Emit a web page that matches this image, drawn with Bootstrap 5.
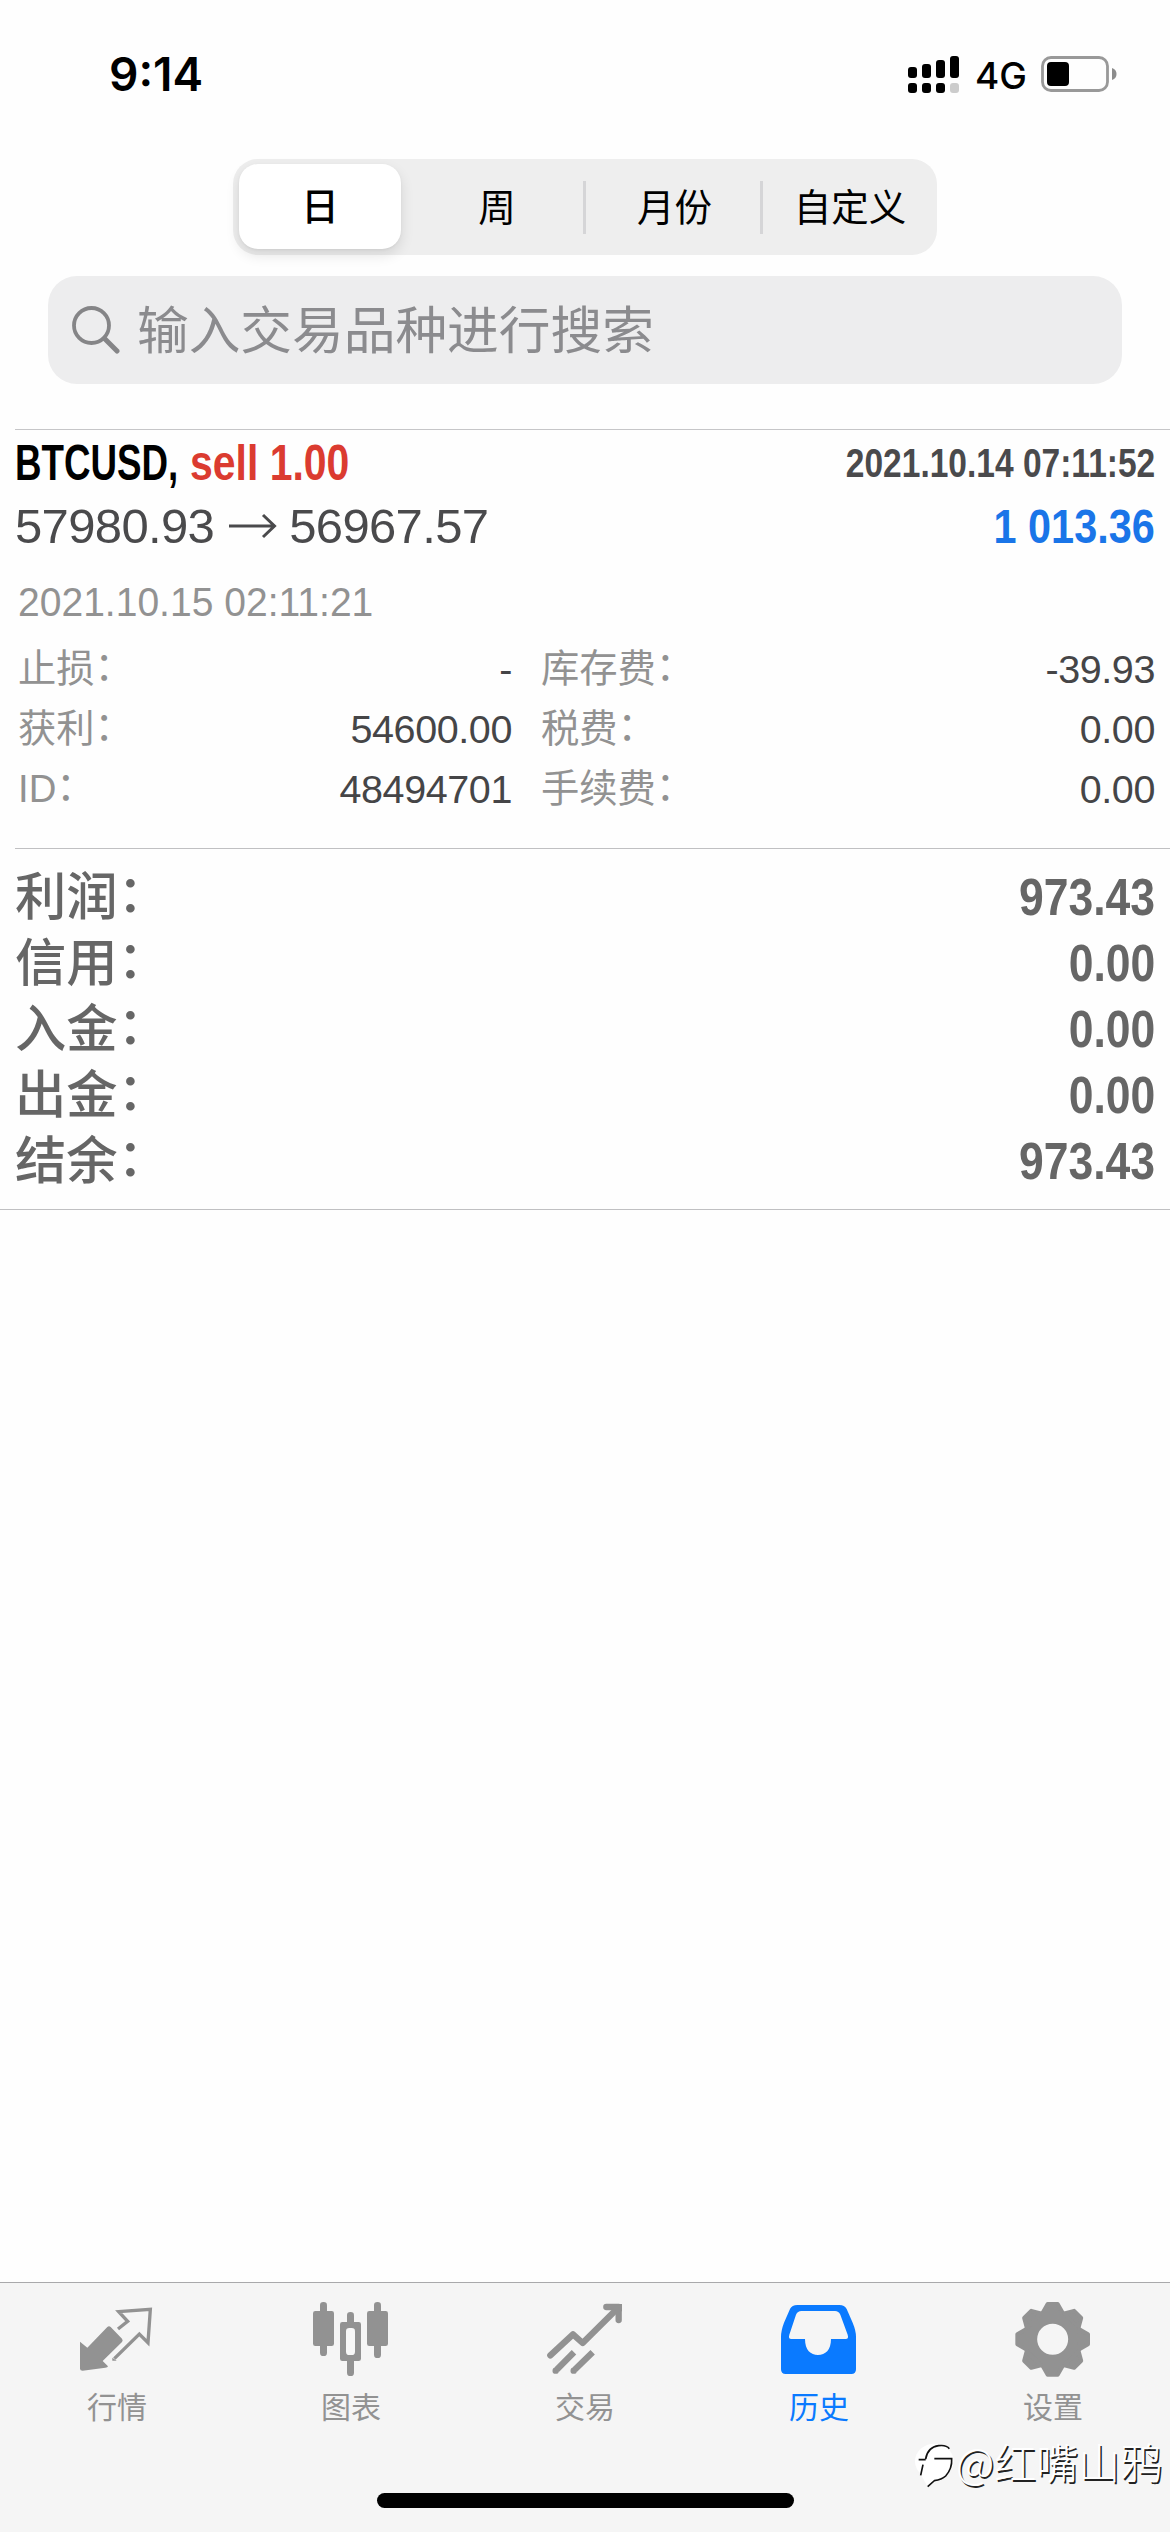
<!DOCTYPE html>
<html lang="zh-CN">
<head>
<meta charset="utf-8">
<meta name="viewport" content="width=device-width, initial-scale=1">
<title>历史</title>
<link href="https://cdn.jsdelivr.net/npm/bootstrap@5.3.0/dist/css/bootstrap.min.css" rel="stylesheet">
<style>
body{font-family:"Liberation Sans","Noto Sans CJK SC",sans-serif;background:#fefefe;color:#000;}
.screen{width:1170px;height:2532px;overflow:hidden}
.status{height:159px;padding:0 53px 0 109px;font-family:Inter,sans-serif}
.clock{font-size:46px;font-weight:600;line-height:56px;margin-top:46px}
.net{font-size:37px;font-weight:500;line-height:46px;margin-left:15px;margin-right:14px;margin-top:53px}
.signal,.battery{margin-top:56px}
.seg{width:704px;height:96px;background:#eee;border-radius:25px;font-size:37.5px}
.seg-item{line-height:98px;padding:0;border:0;background:none;flex:0 0 177px}
.seg-item.active{padding:5px 7px 6px 6px;flex-basis:175px}
.seg-item.active span{display:block;height:85px;line-height:87px;background:#fff;border-radius:19px;box-shadow:0 6px 14px rgba(0,0,0,.11),0 1px 3px rgba(0,0,0,.05);font-weight:500}
.seg-item.wide{flex-basis:178px}
.seg-item.last{flex-basis:174px}
.seg-item.split{background:linear-gradient(#d5d5d7,#d5d5d7) right 22px/3px 53px no-repeat}
.search{margin:21px 48px 0 48px;height:108px;border-radius:29px;background:#ededee;padding-left:24px;color:#8b8b8e}
.search-text{font-size:51.7px;line-height:106px;margin-left:17px;padding-top:2px}
.deal{margin:45px 0 0 15px;border-top:1px solid #c6c6c8;padding-right:15px;height:419px}
.row-a{height:66px;line-height:66px;font-size:49.5px}
.row-b{height:60px;line-height:60px;font-size:49px;color:#4a4a4c}
.row-c{margin-top:9px;padding-left:3px;height:74px;line-height:74px;font-size:40px;color:#929292}
.row-d{height:60px;line-height:60px;font-size:39.5px;color:#454547;letter-spacing:-.4px}
.row-d .key{font-size:38.3px;color:#929292;letter-spacing:0}
.price{letter-spacing:-.65px}
.arrow{margin:0 12px 0 15px}
.fit{display:inline-block;white-space:pre;transform-origin:left}
.fit-end{display:inline-block;white-space:pre;transform-origin:right}
.sym{width:175px}
.sym .fit{transform:scaleX(.742)}
.side .fit{transform:scaleX(.827)}
.red{color:#db3b30}
.blue{color:#1a75e8}
.when{font-size:40px;transform:scaleX(.838);color:#4a4a4c}
.gain{transform:scaleX(.845)}
.date{transform:scaleX(.976)}
.half-l{width:497px;padding-left:3px}
.half-r{padding-left:29px}
/* half-width, vertically centred colon */
.colon{font-family:"Noto Sans CJK JP",sans-serif;font-feature-settings:"halt";line-height:1}
.sum{border-top:1px solid #c0c0c2;margin-left:15px;padding:15px 15px 15px 0;color:#666;height:361px}
.sum-row{height:66px;line-height:66px;font-size:51.3px;font-weight:500}
.sum-row .key{line-height:68px}
.sum-row .fit-end{transform:scaleX(.855);font-weight:700;font-size:52px}
.end-line{height:1px;background:#c0c0c2}
.tabs{height:250px;background:#f5f5f5;border-top:1px solid #a9a9ab}
.tab-item{width:234px;color:#929292;padding-top:18px;font-size:30px;line-height:44px}
.tab-item svg{display:block;margin-bottom:9px}
.tab-item.active{color:#0a7aff}
.home{width:417px;height:15px;border-radius:8px;background:#000;left:377px;top:2493px}
.wm{left:913px;top:2431px;color:#fff;font-size:42px;line-height:60px;font-family:"Noto Sans CJK SC",sans-serif;font-weight:300;text-shadow:1.5px 1.5px 0 #222}
</style>
<script src="https://cdn.jsdelivr.net/npm/bootstrap@5.3.0/dist/js/bootstrap.bundle.min.js"></script>
</head>
<body>
<div class="screen position-relative d-flex flex-column">
  <header class="status d-flex align-items-start">
    <div class="clock me-auto">9:14</div>
    <svg class="signal" width="52" height="38" viewBox="907 56 52 38">
      <rect x="907" y="67" width="9" height="11" rx="3"/><rect x="921" y="64" width="9" height="14" rx="3"/><rect x="935" y="60" width="9" height="18" rx="3"/><rect x="949" y="56" width="9" height="22" rx="3"/>
      <rect x="907" y="83" width="9" height="10" rx="3"/><rect x="921" y="83" width="9" height="10" rx="3"/><rect x="935" y="83" width="9" height="10" rx="3"/><rect x="949" y="83" width="9" height="10" rx="3" fill="#ccc"/>
    </svg>
    <div class="net">4G</div>
    <svg class="battery" width="76" height="36" viewBox="0 0 76 36">
      <rect x="1.5" y="1.5" width="65" height="33" rx="8.5" fill="none" stroke="#999" stroke-width="2.8"/>
      <rect x="6" y="6" width="22" height="24" rx="4"/>
      <path d="M71 12q4.500 1.500 4.500 6t-4.500 6z" fill="#8c8c8c"/>
    </svg>
  </header>

  <div class="seg d-flex mx-auto flex-shrink-0" role="tablist">
    <button class="seg-item active"><span>日</span></button>
    <button class="seg-item split wide">周</button>
    <button class="seg-item split">月份</button>
    <button class="seg-item last">自定义</button>
  </div>

  <div class="search d-flex align-items-center flex-shrink-0">
    <svg width="48" height="48" viewBox="0 0 48 48" fill="none" stroke="#858587" stroke-linecap="round"><circle cx="19.500" cy="19.500" r="17.500" stroke-width="3.800"/><path d="M32.500 32.500 45 45" stroke-width="5"/></svg>
    <span class="search-text">输入交易品种进行搜索</span>
  </div>

  <main class="flex-grow-1">
    <section class="deal">
      <div class="row-a d-flex fw-bold">
        <div class="sym"><span class="fit">BTCUSD,</span></div>
        <div class="side red me-auto"><span class="fit">sell 1.00</span></div>
        <span class="fit-end when text-end">2021.10.14 07:11:52</span>
      </div>
      <div class="row-b d-flex align-items-center">
        <span class="price">57980.93</span>
        <svg class="arrow" width="48" height="26" viewBox="0 0 48 26" fill="none" stroke="#4a4a4c" stroke-width="3"><path d="M0 13H45M34 2 45.500 13 34 24"/></svg>
        <span class="price me-auto">56967.57</span>
        <span class="fit-end gain fw-bold blue">1 013.36</span>
      </div>
      <div class="row-c"><span class="fit date">2021.10.15 02:11:21</span></div>
      <div class="d-flex">
        <div class="half-l">
          <div class="row-d d-flex justify-content-between"><span class="key">止损<span class="colon" lang="ja">：</span></span><span>-</span></div>
          <div class="row-d d-flex justify-content-between"><span class="key">获利<span class="colon" lang="ja">：</span></span><span>54600.00</span></div>
          <div class="row-d d-flex justify-content-between"><span class="key">ID<span class="colon" lang="ja">：</span></span><span>48494701</span></div>
        </div>
        <div class="half-r flex-grow-1">
          <div class="row-d d-flex justify-content-between"><span class="key">库存费<span class="colon" lang="ja">：</span></span><span>-39.93</span></div>
          <div class="row-d d-flex justify-content-between"><span class="key">税费<span class="colon" lang="ja">：</span></span><span>0.00</span></div>
          <div class="row-d d-flex justify-content-between"><span class="key">手续费<span class="colon" lang="ja">：</span></span><span>0.00</span></div>
        </div>
      </div>
    </section>
    <section class="sum">
      <div class="sum-row d-flex justify-content-between"><span class="key">利润<span class="colon" lang="ja">：</span></span><span class="fit-end">973.43</span></div>
      <div class="sum-row d-flex justify-content-between"><span class="key">信用<span class="colon" lang="ja">：</span></span><span class="fit-end">0.00</span></div>
      <div class="sum-row d-flex justify-content-between"><span class="key">入金<span class="colon" lang="ja">：</span></span><span class="fit-end">0.00</span></div>
      <div class="sum-row d-flex justify-content-between"><span class="key">出金<span class="colon" lang="ja">：</span></span><span class="fit-end">0.00</span></div>
      <div class="sum-row d-flex justify-content-between"><span class="key">结余<span class="colon" lang="ja">：</span></span><span class="fit-end">973.43</span></div>
    </section>
    <div class="end-line"></div>
  </main>

  <nav class="tabs d-flex flex-shrink-0">
    <div class="tab-item d-flex flex-column align-items-center">
      <svg width="76" height="76" viewBox="117 93 228 228" fill="currentColor"><path d="M120 215 142 233 202 171Q207 166 212 171L246 206Q250 211 246 216L188 273 204 289Q203 293 196 293L128 302Q120 302 120 296Z"/><path d="M234 177 263 154 236 125 331 118 324 218 298 192 223 266" fill="none" stroke="currentColor" stroke-width="10" stroke-linejoin="miter"/><path d="M217 263 230 272H217Z"/></svg>
      行情
    </div>
    <div class="tab-item d-flex flex-column align-items-center">
      <svg width="76" height="76" viewBox="819 93 228 228" fill="currentColor"><rect x="840" y="96" width="21" height="162" rx="10"/><rect x="819" y="123" width="63" height="105" rx="7"/><rect x="1002" y="96" width="21" height="168" rx="10"/><rect x="981" y="123" width="63" height="105" rx="7"/><rect x="921" y="126" width="21" height="192" rx="10"/><rect x="900" y="156" width="63" height="117" rx="7"/><rect x="918" y="174" width="27" height="81" rx="10" fill="#f7f7f7"/></svg>
      图表
    </div>
    <div class="tab-item d-flex flex-column align-items-center">
      <svg width="76" height="76" viewBox="141 93 228 228" fill="none" stroke="currentColor" stroke-width="19" stroke-linejoin="round"><path d="M151 256 219 193 248 219 356 112" stroke-linecap="round"/><path d="M319 111H356V150" stroke-linecap="round"/><path d="M366 102V125L340 102Z" fill="currentColor" stroke="none"/><path d="M222 247 170 299M278 247 224 299"/><g fill="currentColor" stroke="none"><circle cx="167" cy="302" r="9.500"/><circle cx="221" cy="302" r="9.500"/></g></svg>
      交易
    </div>
    <div class="tab-item active d-flex flex-column align-items-center">
      <svg width="76" height="76" viewBox="843 93 228 228" fill="currentColor"><path fill-rule="evenodd" d="M892 105H1018Q1034 105 1040 117L1058 158Q1068 182 1068 200V298Q1068 312 1054 312H857Q843 312 843 298V200Q843 182 852 158L870 117Q876 105 892 105ZM904 123Q893 123 888 134L868 194Q864 207 874 207H915C915 240 932 255 954 255S993 240 993 207H1037Q1047 207 1043 194L1021 134Q1016 123 1005 123Z"/></svg>
      历史
    </div>
    <div class="tab-item d-flex flex-column align-items-center">
      <svg width="76" height="76" viewBox="435 93 228 228" fill="none" stroke="currentColor"><circle cx="548" cy="208" r="68" stroke-width="43"/><defs><path id="tooth" d="M-30-80-15-106H15L30-80Z" fill="currentColor" stroke-width="12" stroke-linejoin="round"/></defs><g transform="translate(548 208)"><use href="#tooth"/><use href="#tooth" transform="rotate(45)"/><use href="#tooth" transform="rotate(90)"/><use href="#tooth" transform="rotate(135)"/><use href="#tooth" transform="rotate(180)"/><use href="#tooth" transform="rotate(225)"/><use href="#tooth" transform="rotate(270)"/><use href="#tooth" transform="rotate(315)"/></g></svg>
      设置
    </div>
  </nav>

  <div class="home position-absolute"></div>
  <div class="wm position-absolute d-flex align-items-center">
    <svg width="43" height="60" viewBox="128 497 129 180"><ellipse cx="192" cy="588" rx="58" ry="53" fill="#fff"/><path d="M152 628 172 664 230 630Z" fill="#fff"/><path d="M145 583H166M166 581Q172 545 205 541Q228 538 237 550M158 598 151 630M192 580H244Q246 610 226 632Q214 643 192 646L172 664" fill="none" stroke="#111" stroke-width="5"/></svg>
    <span>@红嘴山鸦</span>
  </div>
</div>
</body>
</html>
